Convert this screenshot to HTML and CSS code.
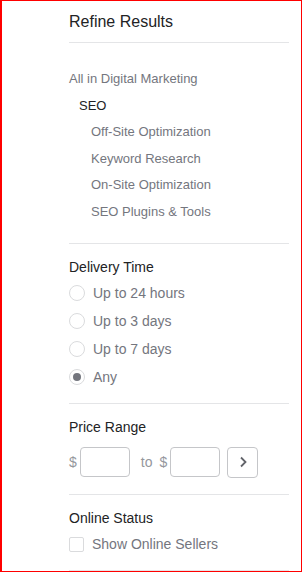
FILE: index.html
```html
<!DOCTYPE html>
<html>
<head>
<meta charset="utf-8">
<link rel="stylesheet" href="styles.css">
</head>
<body>
<div class="frame">
  <aside class="refine">
    <div class="sec sec-head">
      <h2 class="title">Refine Results</h2>
    </div>
    <div class="sec sec-cat">
      <ul class="cats">
        <li class="cat cat-all">All in Digital Marketing</li>
        <li class="cat cat-main">SEO</li>
        <li class="cat cat-sub">Off-Site Optimization</li>
        <li class="cat cat-sub">Keyword Research</li>
        <li class="cat cat-sub">On-Site Optimization</li>
        <li class="cat cat-sub">SEO Plugins &amp; Tools</li>
      </ul>
    </div>
    <div class="sec sec-delivery">
      <h3 class="label">Delivery Time</h3>
      <div class="opt"><span class="radio"></span><span class="opt-text">Up to 24 hours</span></div>
      <div class="opt"><span class="radio"></span><span class="opt-text">Up to 3 days</span></div>
      <div class="opt"><span class="radio"></span><span class="opt-text">Up to 7 days</span></div>
      <div class="opt"><span class="radio checked"></span><span class="opt-text">Any</span></div>
    </div>
    <div class="sec sec-price">
      <h3 class="label">Price Range</h3>
      <div class="price-row">
        <span class="cur">$</span>
        <span class="box"></span>
        <span class="to">to</span>
        <span class="cur cur2">$</span>
        <span class="box"></span>
        <span class="go"><svg width="10" height="12" viewBox="0 0 10 12"><path d="M3 1.5 L7.5 6 L3 10.5" fill="none" stroke="#62646a" stroke-width="1.8"/></svg></span>
      </div>
    </div>
    <div class="sec sec-online">
      <h3 class="label">Online Status</h3>
      <div class="opt opt-check"><span class="check"></span><span class="opt-text">Show Online Sellers</span></div>
    </div>
  </aside>
</div>
</body>
</html>
```
FILE: styles.css
```css
html, body {
  margin: 0;
  padding: 0;
  background: #fff;
}
body {
  font-family: "Liberation Sans", Arial, sans-serif;
  color: #222325;
}
.frame {
  box-sizing: border-box;
  width: 302px;
  height: 572px;
  border: 1px solid #ff0000;
  border-left-width: 2px;
  overflow: hidden;
  padding-left: 67px;
}
.refine {
  width: 220px;
}
.sec {
  border-bottom: 1px solid #e4e5e7;
}
.sec-head {
  padding: 11px 0 10px;
}
.title {
  margin: 0;
  font-size: 16px;
  font-weight: normal;
  line-height: 20px;
  color: #222325;
}
.sec-cat {
  padding: 23px 0 18px;
}
.cats {
  list-style: none;
  margin: 0;
  padding: 0;
}
.cat {
  font-size: 13px;
  line-height: 26.5px;
  color: #74767e;
}
.cat-main {
  padding-left: 10px;
  color: #222325;
}
.cat-sub {
  padding-left: 22px;
}
.label {
  margin: 0;
  font-size: 14px;
  font-weight: normal;
  line-height: 20px;
  color: #222325;
}
.sec-delivery {
  padding: 13px 0 12px;
}
.sec-delivery .label {
  margin-bottom: 2px;
}
.opt {
  display: flex;
  align-items: center;
  height: 28px;
}
.radio {
  box-sizing: border-box;
  width: 16px;
  height: 16px;
  border: 1px solid #dadbdd;
  border-radius: 50%;
  margin-right: 8px;
  display: flex;
  align-items: center;
  justify-content: center;
}
.radio.checked::after {
  content: "";
  width: 8px;
  height: 8px;
  border-radius: 50%;
  background: #74767e;
}
.opt-text {
  font-size: 14px;
  color: #74767e;
}
.sec-price {
  padding: 13px 0 17px;
}
.sec-price .label {
  margin-bottom: 10px;
}
.price-row {
  display: flex;
  align-items: center;
  height: 30px;
}
.cur, .to {
  font-size: 14px;
  color: #95979d;
}
.cur {
  margin-right: 3px;
}
.cur2 {
  margin-left: 7px;
}
.to {
  margin-left: 11px;
}
.box {
  box-sizing: border-box;
  width: 50px;
  height: 30px;
  border: 1px solid #c5c6c9;
  border-radius: 4px;
}
.go {
  box-sizing: border-box;
  width: 31px;
  height: 31px;
  margin-left: 7px;
  border: 1px solid #c5c6c9;
  border-radius: 4px;
  display: flex;
  align-items: center;
  justify-content: center;
}
.go svg {
  display: block;
}
.sec-online {
  padding: 13px 0 12px;
}
.sec-online .label {
  margin-bottom: 2px;
}
.check {
  box-sizing: border-box;
  width: 15px;
  height: 15px;
  border: 1px solid #dadbdd;
  border-radius: 2px;
  margin-right: 8px;
}
```
